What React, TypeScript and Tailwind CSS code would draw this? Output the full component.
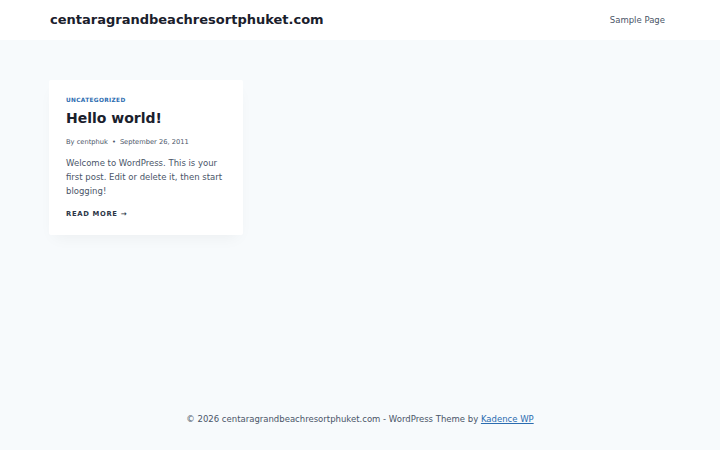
export default function App() {
  return (
    <div className="min-h-[450px] flex flex-col bg-[#f7fafc] font-['DejaVu_Sans',sans-serif] text-[#2d3748]">
      <header className="h-[40px] bg-white flex items-center justify-between pl-[50px] pr-[55px]">
        <div className="text-[13px] font-bold text-[#1a202c]">centaragrandbeachresortphuket.com</div>
        <nav className="text-[8.5px] text-[#4a5568]">Sample Page</nav>
      </header>

      <main className="flex-1 px-[49px] pt-[40px]">
        <article className="w-[194px] bg-white rounded-[2px] shadow-[0_7px_15px_-5px_rgba(0,0,0,0.05)] px-[17px] pt-[17px] pb-[16px]">
          <div className="text-[5.8px] leading-[7px] font-bold tracking-[0.06em] uppercase text-[#2b6cb0]">Uncategorized</div>
          <h2 className="mt-[4px] text-[14px] font-bold text-[#1a202c] leading-[20px]">Hello world!</h2>
          <div className="mt-[9px] flex items-center gap-[4px] text-[6.7px] text-[#4a5568]">
            <span>By centphuk</span>
            <span>•</span>
            <span>September 26, 2011</span>
          </div>
          <p className="mt-[9px] text-[8.5px] leading-[14px] text-[#4a5568]">
            Welcome to WordPress. This is your first post. Edit or delete it, then start blogging!
          </p>
          <div className="mt-[11px] flex items-center gap-[3px] text-[6.8px] font-bold uppercase tracking-[0.1em] text-[#2d3748]">
            <span>Read More</span>
            <span className="text-[7px] leading-none tracking-normal">→</span>
          </div>
        </article>
      </main>

      <footer className="h-[43px] flex items-start justify-center pt-[6px] text-[8.5px] text-[#4a5568]">
        <span>
          © 2026 centaragrandbeachresortphuket.com - WordPress Theme by{" "}
          <span className="underline text-[#2b6cb0]">Kadence WP</span>
        </span>
      </footer>
    </div>
  );
}
